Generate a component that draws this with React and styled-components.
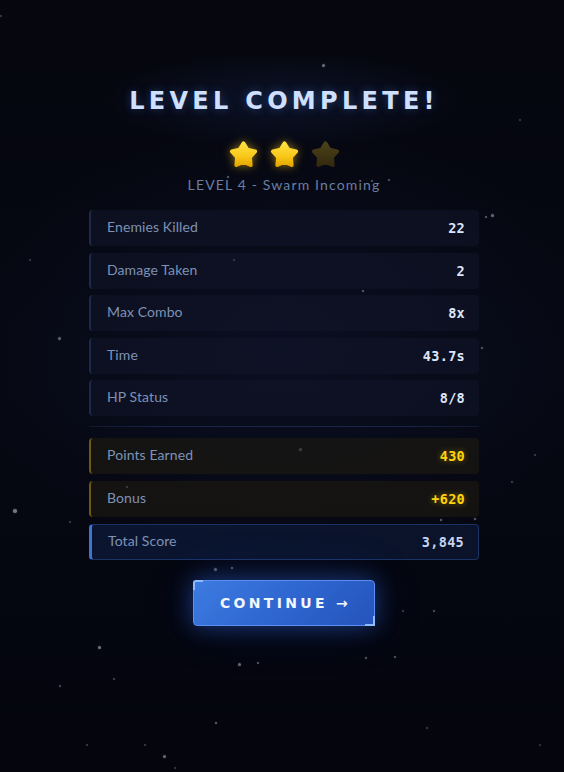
import React from "react";
import styled, { createGlobalStyle, css } from "styled-components";

const Global = createGlobalStyle`
  html, body { margin: 0; padding: 0; background: #04050d; }
  * { box-sizing: border-box; }
`;

const Screen = styled.div`
  position: relative;
  min-height: 772px;
  width: 100%;
  padding-left: 4px;
  overflow: hidden;
  background:
    radial-gradient(ellipse 260px 70px at 50% 100px, rgba(40, 70, 140, 0.2), transparent 70%),
    radial-gradient(ellipse 420px 300px at 50% 45%, rgba(14, 20, 44, 0.55), transparent 75%),
    linear-gradient(180deg, #05060e 0%, #060813 50%, #04050d 100%);
`;

const Starfield = styled.div`
  position: absolute;
  inset: 0;
  pointer-events: none;
`;

const Dot = styled.span`
  position: absolute;
  width: ${(p) => p.$s}px;
  height: ${(p) => p.$s}px;
  border-radius: 50%;
  background: rgba(200, 210, 235, ${(p) => p.$o});
  box-shadow: 0 0 2px rgba(200, 210, 235, ${(p) => p.$o * 0.6});
`;

const Column = styled.main`
  position: relative;
  width: 390px;
  margin: 0 auto;
  padding-top: 87px;
  display: flex;
  flex-direction: column;
  align-items: stretch;
`;

const Title = styled.h1`
  margin: 0 -20px;
  text-align: center;
  font-family: "DejaVu Sans", "Liberation Sans", sans-serif;
  font-weight: 700;
  font-size: 24px;
  line-height: 28px;
  letter-spacing: 4.3px;
  color: #cfe0ff;
  text-shadow: 0 0 10px rgba(90, 140, 255, 0.35);
`;

const StarRow = styled.div`
  margin-top: 24px;
  display: flex;
  justify-content: center;
  gap: 10px;
  height: 31px;
`;

const StarSvg = styled.svg`
  width: 31px;
  height: 31px;
  ${(p) =>
    p.$on &&
    css`
      filter: drop-shadow(0 0 5px rgba(255, 200, 20, 0.55));
    `}
`;

const Subtitle = styled.div`
  margin-top: 6px;
  text-align: center;
  font-family: Lato, "Noto Sans", sans-serif;
  font-size: 14px;
  line-height: 18px;
  letter-spacing: 1.15px;
  color: #6a7fa2;
`;

const Group = styled.div`
  display: flex;
  flex-direction: column;
  gap: 6.6px;
  margin-top: ${(p) => p.$top || 0}px;
`;

const variants = {
  plain: css`
    background: rgba(18, 22, 42, 0.55);
    border-left: 2px solid #1d2a48;
  `,
  gold: css`
    background: rgba(30, 26, 16, 0.6);
    border-left: 2px solid #6d5a10;
  `,
  total: css`
    background: linear-gradient(90deg, #0b1530, #0a1329);
    border: 1px solid #1b3265;
    border-left: 3px solid #3f73d6;
  `,
};

const Row = styled.div`
  height: 36px;
  padding: 0 14px 0 16px;
  border-radius: 4px;
  display: flex;
  align-items: center;
  justify-content: space-between;
  ${(p) => variants[p.$variant || "plain"]}
`;

const Label = styled.span`
  padding-bottom: 3px;
  font-family: Lato, "Noto Sans", sans-serif;
  font-size: 14px;
  color: #7d92b5;
  letter-spacing: 0.1px;
`;

const Value = styled.span`
  font-family: "DejaVu Sans Mono", "Liberation Mono", monospace;
  font-weight: 700;
  font-size: 13.5px;
  letter-spacing: 0.3px;
  color: ${(p) => (p.$gold ? "#ffd20a" : p.$total ? "#c6d4ee" : "#dce6fb")};
  ${(p) =>
    p.$gold &&
    css`
      text-shadow: 0 0 6px rgba(255, 200, 0, 0.45);
    `}
`;

const Divider = styled.hr`
  margin: 10px 0 0;
  border: 0;
  height: 1px;
  background: linear-gradient(90deg, rgba(30, 45, 85, 0.4), #18264a 20%, #18264a 80%, rgba(30, 45, 85, 0.4));
`;

const ButtonWrap = styled.div`
  margin-top: 20px;
  display: flex;
  justify-content: center;
`;

const Button = styled.button`
  position: relative;
  width: 182px;
  height: 46px;
  padding: 0 0 0 3px;
  border-radius: 4px;
  border: 1px solid #5a8ef0;
  background: linear-gradient(135deg, #3c7be0 0%, #2f66d0 50%, #2554bc 100%);
  box-shadow: 0 0 22px rgba(50, 110, 240, 0.45), 0 0 50px rgba(40, 90, 220, 0.18);
  color: #f2f6ff;
  font-family: "DejaVu Sans", "Liberation Sans", sans-serif;
  font-weight: 700;
  font-size: 14px;
  letter-spacing: 3.3px;
  cursor: pointer;

  &::before,
  &::after {
    content: "";
    position: absolute;
    width: 8px;
    height: 8px;
    border-color: #8cbcff;
    border-style: solid;
  }
  &::before {
    top: -1px;
    left: -1px;
    border-width: 2px 0 0 2px;
    border-top-left-radius: 3px;
  }
  &::after {
    bottom: -1px;
    right: -1px;
    border-width: 0 2px 2px 0;
  }
`;

function Star({ on, id }) {
  return (
    <StarSvg viewBox="0 0 24 24" $on={on}>
      <defs>
        <linearGradient id={id} x1="0" y1="0" x2="0" y2="1">
          {on ? (
            <>
              <stop offset="0" stopColor="#ffe040" />
              <stop offset="0.6" stopColor="#f8c81a" />
              <stop offset="1" stopColor="#e6a800" />
            </>
          ) : (
            <>
              <stop offset="0" stopColor="#4a4018" />
              <stop offset="1" stopColor="#342b0f" />
            </>
          )}
        </linearGradient>
      </defs>
      <polygon
        points="12,3.4 15.06,8.29 21.03,9.56 16.95,14.11 17.58,20.19 12,17.7 6.42,20.19 7.05,14.11 2.97,9.56 8.94,8.29"
        fill={`url(#${id})`}
        stroke={`url(#${id})`}
        strokeWidth="3"
        strokeLinejoin="round"
      />
    </StarSvg>
  );
}

const stars = [
  [323, 65, 3, 0.5], [486, 217, 2.5, 0.45], [492, 215, 3, 0.5], [234, 260, 2.5, 0.5],
  [363, 291, 2.5, 0.45], [59, 338, 3, 0.45], [482, 348, 2.5, 0.45], [15, 511, 3.5, 0.55],
  [300, 449, 3, 0.55], [127, 487, 2.5, 0.6], [441, 520, 2.5, 0.5], [338, 539, 2.5, 0.5],
  [215, 569, 3, 0.45], [70, 522, 2, 0.3], [512, 482, 2, 0.3], [99, 647, 3, 0.55],
  [114, 679, 2.5, 0.35], [60, 686, 1.5, 0.35], [239, 664, 3, 0.5], [366, 658, 2.5, 0.45],
  [216, 723, 2.5, 0.5], [87, 745, 2, 0.3], [145, 745, 2.5, 0.3], [164, 756, 3, 0.5],
  [403, 611, 2, 0.3], [427, 728, 2, 0.3], [175, 768, 2, 0.3], [232, 568, 2.5, 0.5],
  [395, 657, 2.5, 0.45], [434, 611, 2, 0.4], [475, 519, 2.5, 0.5], [228, 177, 2, 0.45],
  [389, 180, 2, 0.4], [372, 181, 2, 0.4], [1, 16, 2, 0.3], [258, 663, 2.5, 0.45],
  [535, 455, 2, 0.3], [540, 745, 2, 0.25], [30, 260, 1.5, 0.25], [520, 120, 1.5, 0.25],
];

const rows = [
  ["Enemies Killed", "22"],
  ["Damage Taken", "2"],
  ["Max Combo", "8x"],
  ["Time", "43.7s"],
  ["HP Status", "8/8"],
];

export default function App() {
  return (
    <>
      <Global />
      <Screen>
        <Starfield>
          {stars.map(([x, y, s, o], i) => (
            <Dot key={i} $s={s} $o={o} style={{ left: x - s / 2, top: y - s / 2 }} />
          ))}
        </Starfield>
        <Column>
          <Title>LEVEL COMPLETE!</Title>
          <StarRow>
            <Star on id="s1" />
            <Star on id="s2" />
            <Star id="s3" />
          </StarRow>
          <Subtitle>LEVEL 4 - Swarm Incoming</Subtitle>
          <Group $top={16}>
            {rows.map(([l, v]) => (
              <Row key={l}>
                <Label>{l}</Label>
                <Value>{v}</Value>
              </Row>
            ))}
          </Group>
          <Divider />
          <Group $top={11}>
            <Row $variant="gold">
              <Label>Points Earned</Label>
              <Value $gold>430</Value>
            </Row>
            <Row $variant="gold">
              <Label>Bonus</Label>
              <Value $gold>+620</Value>
            </Row>
            <Row $variant="total">
              <Label>Total Score</Label>
              <Value $total>3,845</Value>
            </Row>
          </Group>
          <ButtonWrap>
            <Button>CONTINUE →</Button>
          </ButtonWrap>
        </Column>
      </Screen>
    </>
  );
}
